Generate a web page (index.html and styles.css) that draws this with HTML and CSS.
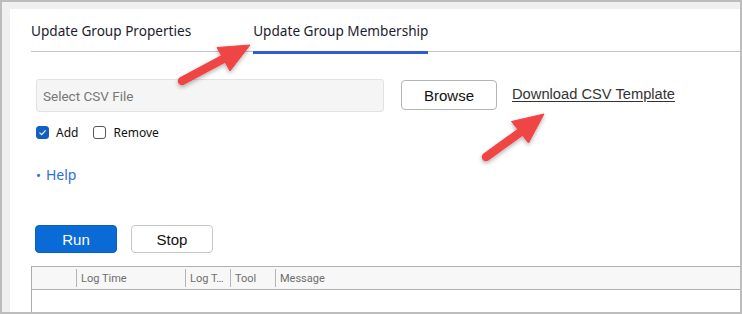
FILE: index.html
```html
<!DOCTYPE html>
<html>
<head>
<meta charset="utf-8">
<link rel="stylesheet" href="styles.css">
</head>
<body>
<div class="frame">
  <div class="panel">
    <div class="tabs">
      <div class="tab">Update Group Properties</div>
      <div class="tab active">Update Group Membership</div>
    </div>
    <div class="form">
      <div class="file-row">
        <div class="file-input">Select CSV File</div>
        <button class="btn browse">Browse</button>
        <a class="download" href="#">Download CSV Template</a>
      </div>
      <div class="checks">
        <label class="check"><span class="box checked"><svg width="9" height="9" viewBox="0 0 9 9"><path d="M1.5 4.6 L3.6 6.6 L7.6 2.4" fill="none" stroke="#fff" stroke-width="1.1"/></svg></span>Add</label>
        <label class="check"><span class="box"></span>Remove</label>
      </div>
      <div class="help"><span class="bullet">•</span>Help</div>
      <div class="actions">
        <button class="btn run">Run</button>
        <button class="btn stop">Stop</button>
      </div>
    </div>
    <div class="table">
      <div class="thead">
        <div class="th first"></div>
        <div class="th c-time"><span>Log Time</span></div>
        <div class="th c-type"><span>Log T…</span></div>
        <div class="th c-tool"><span>Tool</span></div>
        <div class="th c-msg"><span>Message</span></div>
      </div>
      <div class="tbody"></div>
    </div>
  </div>
  <svg class="arrows" width="742" height="314" viewBox="0 0 742 314">
    <defs>
      <filter id="sh" x="-30%" y="-30%" width="160%" height="160%">
        <feDropShadow dx="0" dy="2" stdDeviation="2" flood-color="#000" flood-opacity="0.3"/>
      </filter>
    </defs>
    <g fill="#f04545" stroke="#f04545" filter="url(#sh)">
      <line x1="180" y1="79" x2="223" y2="56" stroke-width="8.5" stroke-linecap="round"/>
      <polygon points="248,43 215,45.5 228,69" stroke-width="1" stroke-linejoin="round"/>
      <line x1="484" y1="155" x2="520" y2="129" stroke-width="8.5" stroke-linecap="round"/>
      <polygon points="542,112 509.5,119.5 526.5,141" stroke-width="1" stroke-linejoin="round"/>
    </g>
  </svg>
</div>
</body>
</html>
```
FILE: styles.css
```css
* { box-sizing: border-box; }
html, body { margin: 0; padding: 0; background: #fff; }
.frame {
  position: relative;
  width: 742px;
  height: 314px;
  border: 2px solid #bdbdbd;
  background: #f0f0f0;
  padding: 7px 0 0 8px;
  overflow: hidden;
}
.panel {
  background: #fff;
  height: 100%;
  padding-left: 21px;
  display: flex;
  flex-direction: column;
}
.tabs {
  display: flex;
  gap: 62px;
  height: 43px;
  border-bottom: 1px solid #c4c4c4;
  font-family: "Noto Sans", sans-serif;
  font-size: 13.6px;
  color: #1c1c2e;
}
.tab {
  padding-top: 12px;
  height: 44px;
  white-space: nowrap;
}
.tab.active {
  border-bottom: 3px solid #2f5bd6;
  height: 45px;
  margin-bottom: -2px;
}
.form {
  padding-left: 5px;
  padding-top: 27px;
}
.file-row {
  display: flex;
  align-items: flex-start;
  height: 33px;
}
.file-input {
  width: 348px;
  height: 33px;
  background: #f5f5f5;
  border: 1px solid #e2e2e2;
  border-radius: 3px;
  padding-left: 6px;
  display: flex;
  align-items: center;
  font-family: Roboto, sans-serif;
  font-size: 13.5px;
  color: #777;
}
.btn {
  font-family: "Liberation Sans", Arial, sans-serif;
  font-size: 15px;
  border-radius: 4px;
  background: #fff;
  color: #111;
  padding: 0;
  cursor: pointer;
}
.browse {
  margin-top: 1px;
  margin-left: 17px;
  width: 96px;
  height: 30px;
  border: 1px solid #b4b4b4;
}
.download {
  margin-left: 15px;
  margin-top: 7px;
  font-family: "Liberation Sans", Arial, sans-serif;
  font-size: 14.7px;
  line-height: 17px;
  color: #333;
  text-decoration: underline;
  text-underline-offset: 2px;
}
.checks {
  display: flex;
  gap: 15px;
  margin-top: 14px;
  height: 13px;
  font-family: "Noto Sans", sans-serif;
  font-size: 12px;
  color: #111;
}
.check {
  display: flex;
  align-items: center;
  gap: 7px;
  line-height: 13px;
}
.box {
  width: 13px;
  height: 13px;
  border: 1px solid #555;
  border-radius: 3px;
  background: #fff;
  display: flex;
  align-items: center;
  justify-content: center;
}
.box.checked {
  background: #1260c2;
  border-color: #1260c2;
}
.help {
  margin-top: 27px;
  font-family: "Noto Sans", sans-serif;
  font-size: 14px;
  color: #2b6fd6;
  line-height: 18px;
  display: flex;
  align-items: center;
}
.bullet {
  font-size: 13px;
  margin-left: 0;
  margin-right: 5px;
}
.actions {
  display: flex;
  gap: 14px;
  margin-top: 41px;
  margin-left: -1px;
}
.run, .stop {
  width: 82px;
  height: 28px;
}
.run {
  background: #0a6bd6;
  border: 1px solid #0a5fc0;
  color: #fff;
}
.stop {
  border: 1px solid #c6c6c6;
}
.table {
  margin-top: 13px;
  flex: 1;
  border-left: 1px solid #ababab;
  display: flex;
  flex-direction: column;
}
.thead {
  display: flex;
  height: 24px;
  background: #f7f7f7;
  border-top: 1px solid #b0b0b0;
  border-bottom: 1px solid #b0b0b0;
  font-family: Roboto, sans-serif;
  font-size: 11px;
  color: #6e6e6e;
}
.th {
  display: flex;
  align-items: center;
  white-space: nowrap;
}
.th span {
  display: flex;
  align-items: center;
  height: 18px;
  border-left: 1px solid #b5b5b5;
  padding-left: 4px;
  width: 100%;
}
.first { width: 44px; }
.c-time { width: 109px; }
.c-type { width: 45px; }
.c-tool { width: 45px; }
.c-msg { flex: 1; }
.tbody { flex: 1; background: #fff; }
.arrows {
  position: absolute;
  left: 0;
  top: 0;
  pointer-events: none;
}
```
